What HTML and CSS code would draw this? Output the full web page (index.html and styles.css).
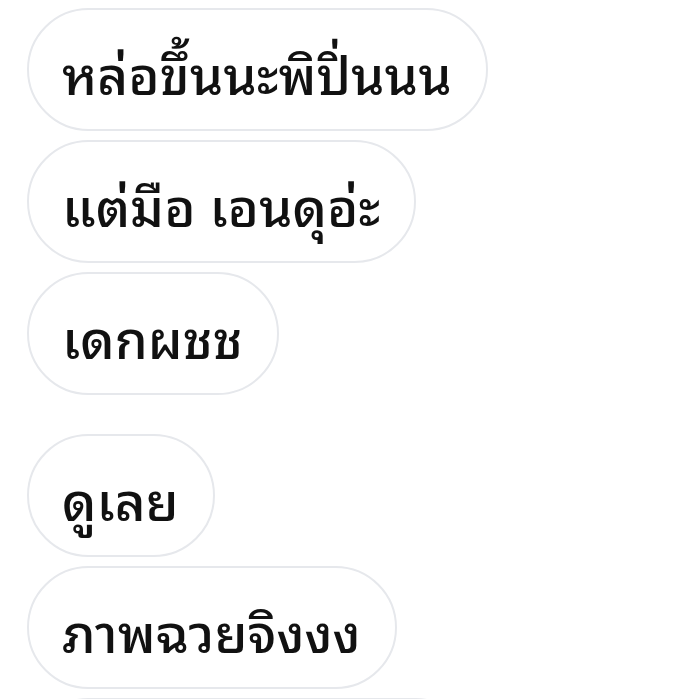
FILE: index.html
```html
<!DOCTYPE html>
<html lang="th">
<head>
<meta charset="utf-8">
<link rel="stylesheet" href="styles.css">
</head>
<body>
<div class="chat">
  <div class="group">
    <div class="bubble">หล่อขึ้นนะพิปิ่นนน</div>
    <div class="bubble">แต่มือ เอนดุอ่ะ</div>
    <div class="bubble">เดกผชช</div>
  </div>
  <div class="group">
    <div class="bubble">ดูเลย</div>
    <div class="bubble">ภาพฉวยจิงงง</div>
    <div class="bubble bubble-partial">&nbsp;</div>
  </div>
</div>
</body>
</html>
```
FILE: styles.css
```css
html, body {
  margin: 0;
  padding: 0;
  background: #ffffff;
  overflow: hidden;
  height: 699px;
}
.chat {
  display: flex;
  flex-direction: column;
  gap: 39px;
  padding: 8px 0 0 27px;
}
.group {
  display: flex;
  flex-direction: column;
  align-items: flex-start;
  gap: 9px;
}
.bubble {
  box-sizing: border-box;
  height: 123px;
  display: flex;
  align-items: center;
  padding: 4px 34px 0 33px;
  border: 2px solid #e6e8ec;
  border-radius: 62px;
  font-family: "Noto Sans Thai Looped", "Noto Sans Thai", sans-serif;
  font-weight: 500;
  font-size: 53px;
  color: #111;
  white-space: nowrap;
}
.bubble-partial {
  width: 450px;
}
```
